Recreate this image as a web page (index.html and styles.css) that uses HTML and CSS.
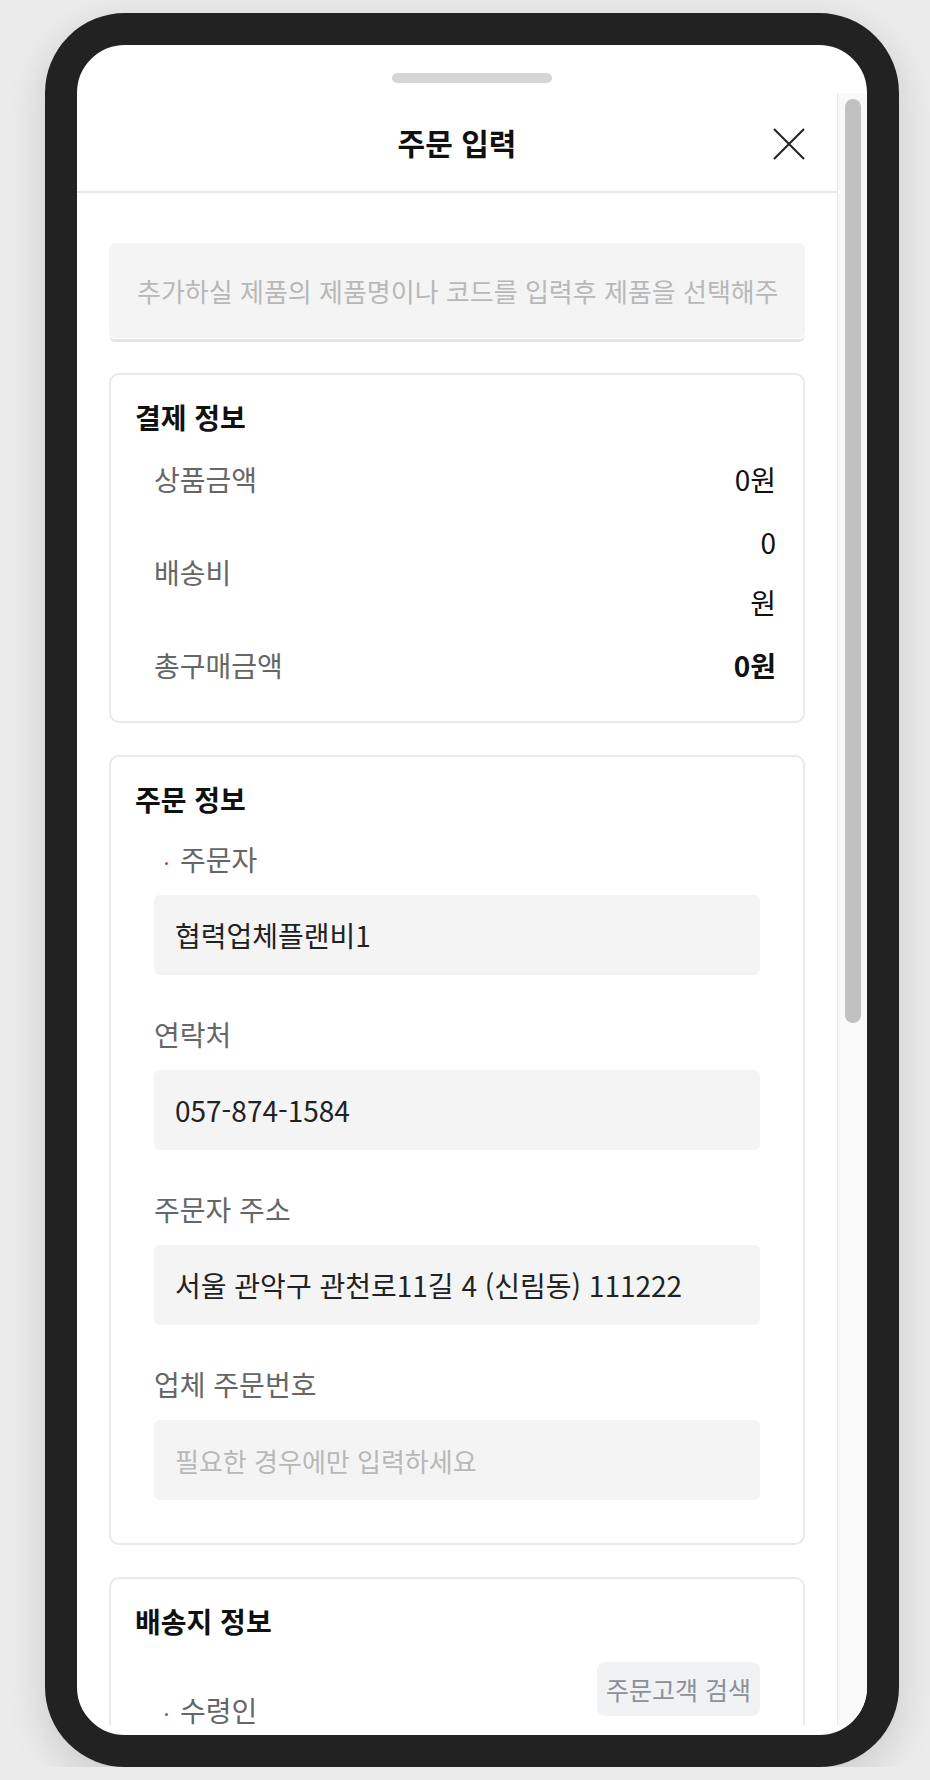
FILE: index.html
```html
<!DOCTYPE html>
<html lang="ko">
  <head>
    <meta charset="UTF-8" />
    <meta name="viewport" content="width=device-width, initial-scale=1.0" />
    <title>주문 입력</title>
    <link rel="stylesheet" href="styles.css">
  </head>
  <body>
    <div class="phone">
      <div class="screen">
        <div class="handle-area"><span class="handle"></span></div>

        <div class="viewport">
          <div class="sheet">
            <header class="sheet-header">
              <h2>주문 입력</h2>
              <button type="button" class="btn-close" aria-label="닫기">
                <svg width="32" height="32" viewBox="0 0 32 32">
                  <path d="M1 1L31 31M31 1L1 31" stroke="#222" stroke-width="2" fill="none" />
                </svg>
              </button>
            </header>

            <form class="sheet-body" id="orderForm">
              <div class="search">
                <input
                  type="text"
                  id="productSearch"
                  placeholder="추가하실 제품의 제품명이나 코드를 입력후 제품을 선택해주세요"
                />
              </div>

              <!-- 결제 정보 -->
              <section class="card">
                <h3>결제 정보</h3>
                <div class="pay-rows">
                  <div class="pay-row">
                    <span class="pay-label">상품금액</span>
                    <span class="pay-value">0원</span>
                  </div>
                  <div class="pay-row">
                    <span class="pay-label">배송비</span>
                    <span class="pay-value">0<br />원</span>
                  </div>
                  <div class="pay-row">
                    <span class="pay-label">총구매금액</span>
                    <span class="pay-value total">0원</span>
                  </div>
                </div>
              </section>

              <!-- 주문 정보 -->
              <section class="card">
                <h3>주문 정보</h3>
                <div class="field-list">
                  <div class="field">
                    <label for="orderer"><span class="dot"></span>주문자</label>
                    <input type="text" id="orderer" value="협력업체플랜비1" />
                  </div>
                  <div class="field">
                    <label for="ordererPhone">연락처</label>
                    <input type="text" id="ordererPhone" value="057-874-1584" />
                  </div>
                  <div class="field">
                    <label for="ordererAddr">주문자 주소</label>
                    <input type="text" id="ordererAddr" value="서울 관악구 관천로11길 4 (신림동) 111222" />
                  </div>
                  <div class="field">
                    <label for="vendorNo">업체 주문번호</label>
                    <input type="text" id="vendorNo" placeholder="필요한 경우에만 입력하세요" />
                  </div>
                </div>
              </section>

              <!-- 배송지 정보 -->
              <section class="card">
                <h3>배송지 정보</h3>
                <div class="field-list">
                  <div class="field">
                    <div class="field-head">
                      <label for="receiver"><span class="dot"></span>수령인</label>
                      <button type="button" class="btn-search">주문고객 검색</button>
                    </div>
                    <input type="text" id="receiver" placeholder="수령인 이름을 입력하세요" />
                  </div>
                  <div class="field">
                    <label for="receiverPhone"><span class="dot"></span>연락처</label>
                    <input type="text" id="receiverPhone" placeholder="연락처를 입력하세요" />
                  </div>
                  <div class="field">
                    <label for="receiverAddr"><span class="dot"></span>배송지 주소</label>
                    <input type="text" id="receiverAddr" placeholder="주소를 검색하세요" />
                  </div>
                  <div class="field">
                    <label for="memo">배송 메모</label>
                    <input type="text" id="memo" placeholder="배송 시 요청사항을 입력하세요" />
                  </div>
                </div>
              </section>

              <button type="submit" class="btn-submit">주문 등록</button>
            </form>
          </div>

          <!-- 스크롤바 -->
          <div class="scrollbar">
            <div class="scrollbar-thumb"></div>
          </div>
        </div>
      </div>
    </div>
  </body>
</html>
```

FILE: styles.css
```css
/* General styles */
body {
  margin: 0;
  padding: 13px 0 0 45px;
  background-color: #ebebeb;
  font-family: "Noto Sans CJK KR", "Noto Sans", sans-serif;
}

.phone {
  width: 854px;
  height: 1754px;
  box-sizing: border-box;
  border: 32px solid #222;
  border-radius: 80px;
  background-color: white;
  box-shadow: 0 12px 40px rgba(0, 0, 0, 0.14);
  overflow: hidden;
}

.screen {
  height: 100%;
  box-sizing: border-box;
  padding-bottom: 10px;
  display: flex;
  flex-direction: column;
}

.handle-area {
  height: 48px;
  box-sizing: border-box;
  padding-top: 28px;
  display: flex;
  justify-content: center;
}

.handle {
  width: 160px;
  height: 10px;
  border-radius: 5px;
  background-color: #d5d5d5;
}

/* Scroll area */
.viewport {
  flex: 1;
  min-height: 0;
  display: flex;
}

.sheet {
  flex: 1;
  min-width: 0;
  overflow-y: auto;
  scrollbar-width: none;
}

.scrollbar {
  width: 30px;
  box-sizing: border-box;
  padding: 6px 6px 0 7px;
  border-left: 1px solid #e8e8e8;
  background-color: #f9f9f9;
}

.scrollbar-thumb {
  height: 924px;
  border-radius: 8px;
  background-color: #c1c1c1;
}

.sheet-header {
  height: 98px;
  padding: 0 32px;
  display: grid;
  grid-template-columns: 1fr auto 1fr;
  align-items: center;
  border-bottom: 2px solid #e8e8e8;
}

.sheet-header h2 {
  grid-column: 2;
  margin: 0;
  font-size: 30px;
  font-weight: bold;
  color: #111;
}

.btn-close {
  grid-column: 3;
  justify-self: end;
  margin-top: 4px;
  padding: 0;
  border: none;
  background: none;
  display: flex;
  cursor: pointer;
}

.sheet-body {
  padding: 50px 32px 70px;
  display: flex;
  flex-direction: column;
  gap: 32px;
}

.search {
  padding-bottom: 1px;
  border-bottom: 3px solid #e6e6e6;
  border-radius: 6px;
  margin-bottom: -1px;
}

.search input {
  display: block;
  width: 100%;
  height: 95px;
  box-sizing: border-box;
  padding: 0 25px 0 28px;
  border: none;
  border-radius: 6px;
  background-color: #f4f4f4;
  font-family: inherit;
  font-size: 26px;
  color: #222;
}

input::placeholder {
  color: #b8b8b8;
  font-size: 26px;
}

/* Cards */
.card {
  border: 2px solid #e9e9e9;
  border-radius: 10px;
  padding: 23px 24px 26px;
}

.card h3 {
  margin: 0;
  font-size: 28px;
  line-height: 38px;
  font-weight: bold;
  color: #111;
}

.pay-rows {
  margin-top: 13px;
  padding: 0 3px 0 19px;
  display: flex;
  flex-direction: column;
  gap: 3px;
}

.pay-row {
  display: flex;
  justify-content: space-between;
  align-items: center;
  font-size: 28px;
  line-height: 60px;
}

.pay-label {
  color: #666;
}

.pay-value {
  color: #111;
  text-align: right;
}

.pay-value.total {
  font-weight: bold;
}

.field-list {
  margin-top: 22px;
  padding: 0 19px 17px;
  display: flex;
  flex-direction: column;
  gap: 40px;
}

.field label {
  display: block;
  margin-bottom: 17px;
  font-size: 28px;
  line-height: 38px;
  color: #666;
}

.field input {
  display: block;
  width: 100%;
  height: 80px;
  box-sizing: border-box;
  padding: 0 21px;
  border: none;
  border-radius: 6px;
  background-color: #f4f4f4;
  font-family: inherit;
  font-size: 28px;
  color: #222;
}

.dot {
  display: inline-block;
  width: 3px;
  height: 3px;
  margin: 0 12px 0 11px;
  border-radius: 50%;
  background-color: #e53935;
  vertical-align: middle;
}

.field-head {
  margin-bottom: 17px;
  display: flex;
  justify-content: space-between;
  align-items: flex-start;
}

.field-head label {
  margin-bottom: 0;
  padding-top: 29px;
}

.btn-search {
  height: 54px;
  padding: 0 9px;
  border: none;
  border-radius: 8px;
  background-color: #f1f2f4;
  color: #8b9099;
  font-family: inherit;
  font-size: 25px;
  cursor: pointer;
}

.btn-submit {
  height: 90px;
  border: none;
  border-radius: 8px;
  background-color: #222;
  color: white;
  font-family: inherit;
  font-size: 28px;
  font-weight: bold;
  cursor: pointer;
}
```
